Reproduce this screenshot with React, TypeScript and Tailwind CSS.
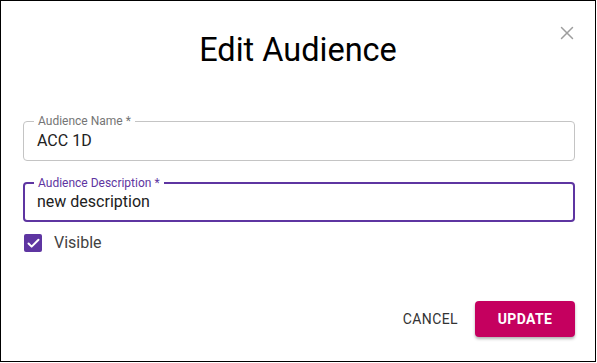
import { Check, X } from "lucide-react";

type FieldProps = {
  label: string;
  value: string;
  focused?: boolean;
};

function OutlinedField({ label, value, focused }: FieldProps) {
  return (
    <div
      className={
        focused
          ? "relative h-[40px] rounded-[4px] border-2 border-[#5e35a1] px-[12px] flex items-center"
          : "relative h-[40px] rounded-[4px] border border-[#c4c4c4] px-[13px] flex items-center"
      }
    >
      <span
        className={
          focused
            ? "absolute -top-[8px] left-[9px] bg-white px-[4px] text-[12px] leading-[14px] text-[#5e35a1]"
            : "absolute -top-[8px] left-[10px] bg-white px-[4px] text-[12px] leading-[14px] text-[#757575]"
        }
      >
        {label}
      </span>
      <span className="text-[16px] leading-[20px] text-[#212121]">{value}</span>
    </div>
  );
}

export default function App() {
  return (
    <div className="w-[596px] h-[362px] border border-black bg-white relative flex flex-col font-['Roboto',sans-serif]">
      <button className="absolute top-[21px] right-[17px] text-[#9e9e9e]">
        <X size={22} strokeWidth={1.6} />
      </button>

      <h2 className="mt-[29px] text-center text-[32.5px] leading-[40px] font-normal text-black">
        Edit Audience
      </h2>

      <div className="mt-[51px] pl-[22px] pr-[20px] flex flex-col gap-[21px]">
        <OutlinedField label="Audience Name *" value="ACC 1D" />
        <OutlinedField label="Audience Description *" value="new description" focused />
      </div>

      <label className="mt-[12px] ml-[23px] flex items-center gap-[12px]">
        <span className="w-[18px] h-[18px] rounded-[2px] bg-[#5e35a1] flex items-center justify-center text-white">
          <Check size={15} strokeWidth={3.2} />
        </span>
        <span className="text-[16px] leading-[18px] text-[#424242]">Visible</span>
      </label>

      <div className="mt-auto mb-[24px] mr-[20px] flex justify-end items-center gap-[9px]">
        <button className="h-[36px] px-[8px] text-[14px] font-normal tracking-[0.4px] text-[#333333]">
          CANCEL
        </button>
        <button className="h-[36px] w-[100px] rounded-[4px] bg-[#c5005f] text-[14px] font-bold tracking-[0.4px] text-white shadow-[0_2px_3px_rgba(0,0,0,0.3)]">
          UPDATE
        </button>
      </div>
    </div>
  );
}
